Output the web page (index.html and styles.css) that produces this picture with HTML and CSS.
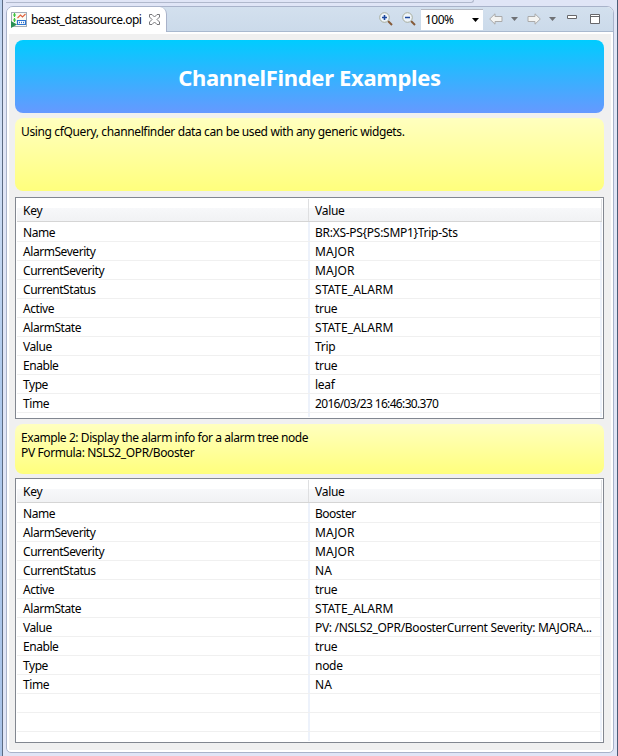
FILE: index.html
```
<!DOCTYPE html>
<html lang="en">
<head>
<meta charset="utf-8">
<title>beast_datasource.opi</title>
<link rel="stylesheet" href="styles.css">
</head>
<body>
<div class="window">
  <div class="strip"></div>
  <div class="folder">
    <div class="tabbar">
      <div class="tab">
        <svg class="opi" width="16" height="16" viewBox="0 0 16 16"><rect x=".5" y=".5" width="15" height="14" fill="#fbfbf4" stroke="#a3adb8"/><path d="M3.500 1v4M2 3h3M3.500 6v4M2 8h3" stroke="#3ec63e" stroke-width="1.200" fill="none"/><path d="M6.500 6l3-3 2 2 3-3" stroke="#e0603c" fill="none" stroke-width="1.100"/><path d="M6.500 8.500h8v4h-8z" fill="#fff" stroke="#2d74d0" stroke-width="1.200"/><path d="M8 10.500h6" stroke="#2d74d0" stroke-width="1.500" stroke-dasharray="1 1"/><path d="M0 9l6 3.500L0 16z" fill="#2a9055"/></svg>
        <span class="tab-name">beast_datasource.opi</span>
        <svg class="close" width="11" height="11" viewBox="0 0 11 11"><path d="M.5.500h2.500l2.500 2.500L8 .5h2.500v2.500L8 5.500l2.500 2.500v2.500H8L5.500 8 3 10.500H.5V8L3 5.500.5 3z" fill="#fff" stroke="#76767a"/></svg>
      </div>
      <div class="tools">
        <svg class="zin" width="14" height="14" viewBox="0 0 14 14"><path d="M9 9l4 4" stroke="#855a38" stroke-width="2"/><circle cx="5.500" cy="5.500" r="4.800" fill="#eef5fb" stroke="#a8ad9d"/><path d="M3 5.500h5M5.500 3v5" stroke="#1c489f" stroke-width="1.600"/></svg>
        <svg class="zout" width="14" height="14" viewBox="0 0 14 14"><path d="M9 9l4 4" stroke="#855a38" stroke-width="2"/><circle cx="5.500" cy="5.500" r="4.800" fill="#eef5fb" stroke="#a8ad9d"/><path d="M3 5.500h5" stroke="#1c489f" stroke-width="1.600"/></svg>
        <div class="combo"><span>100%</span><svg width="7" height="4" viewBox="0 0 7 4"><path d="M0 0h7L3.500 4z" fill="#000"/></svg></div>
        <svg class="back" width="14" height="12" viewBox="0 0 14 12"><path d="M.7 6L6 .8v2.700h7v5H6v2.700z" fill="#f4f4f2" stroke="#aaa" stroke-linejoin="round"/></svg>
        <svg class="drop" width="7" height="4" viewBox="0 0 7 4"><path d="M0 0h7L3.500 4z" fill="#6f7175"/></svg>
        <svg class="fwd" width="14" height="12" viewBox="0 0 14 12"><path d="M13.300 6L8 .8v2.700H1v5h7v2.700z" fill="#f4f4f2" stroke="#aaa" stroke-linejoin="round"/></svg>
        <svg class="drop" width="7" height="4" viewBox="0 0 7 4"><path d="M0 0h7L3.500 4z" fill="#6f7175"/></svg>
        <svg class="min" width="10" height="4" viewBox="0 0 10 4"><path d="M.5.500h9v3h-9z" fill="#fff" stroke="#67676b"/></svg>
        <svg class="max" width="10" height="10" viewBox="0 0 10 10"><path d="M.5.500h9v9h-9zM.5 2.500h9" fill="#fff" stroke="#67676b"/></svg>
      </div>
    </div>
    <div class="canvas">
      <h1 class="banner"><span>ChannelFinder Examples</span></h1>
      <div class="note note-tall"><p class="n1">Using cfQuery, channelfinder data can be used with any generic widgets.</p></div>
      <div class="table table-a">
        <div class="head"><span>Key</span><span>Value</span></div>
        <div class="row"><span>Name</span><span>BR:XS-PS{PS:SMP1}Trip-Sts</span></div>
        <div class="row"><span>AlarmSeverity</span><span class="caps">MAJOR</span></div>
        <div class="row"><span>CurrentSeverity</span><span class="caps">MAJOR</span></div>
        <div class="row"><span>CurrentStatus</span><span class="caps">STATE_ALARM</span></div>
        <div class="row"><span>Active</span><span>true</span></div>
        <div class="row"><span>AlarmState</span><span class="caps">STATE_ALARM</span></div>
        <div class="row"><span>Value</span><span>Trip</span></div>
        <div class="row"><span>Enable</span><span>true</span></div>
        <div class="row"><span>Type</span><span>leaf</span></div>
        <div class="row"><span>Time</span><span class="stamp">2016/03/23 16:46:30.370</span></div>
        <div class="row rest"><span></span><span></span></div>
      </div>
      <div class="note note-short"><p class="n2">Example 2: Display the alarm info for a alarm tree node</p><p class="n3">PV Formula: NSLS2_OPR/Booster</p></div>
      <div class="table table-b">
        <div class="head"><span>Key</span><span>Value</span></div>
        <div class="row"><span>Name</span><span class="word">Booster</span></div>
        <div class="row"><span>AlarmSeverity</span><span class="caps">MAJOR</span></div>
        <div class="row"><span>CurrentSeverity</span><span class="caps">MAJOR</span></div>
        <div class="row"><span>CurrentStatus</span><span class="caps">NA</span></div>
        <div class="row"><span>Active</span><span>true</span></div>
        <div class="row"><span>AlarmState</span><span class="caps">STATE_ALARM</span></div>
        <div class="row"><span>Value</span><span class="long">PV: /NSLS2_OPR/BoosterCurrent Severity: MAJORA...</span></div>
        <div class="row"><span>Enable</span><span>true</span></div>
        <div class="row"><span>Type</span><span>node</span></div>
        <div class="row"><span>Time</span><span class="caps">NA</span></div>
        <div class="row"><span></span><span></span></div>
        <div class="row"><span></span><span></span></div>
        <div class="row rest"><span></span><span></span></div>
      </div>
    </div>
  </div>
</div>
</body>
</html>
```
FILE: styles.css
```
* { box-sizing: border-box; }
body { margin: 0; width: 618px; height: 756px; overflow: hidden; font: 12px/15px "Noto Sans", "Open Sans", sans-serif; letter-spacing: -0.28px; color: #000; background: linear-gradient(#bdd3f0, #d2e0f5 20%, #aec9ec 50%, #a9c3e8); }
svg { display: block; flex: none; }
p, h1 { margin: 0; }
.window { margin-left: 2px; width: 616px; height: 756px; padding: 0 3px; background: #e0e5f6; border-left: 1px solid #5c6b82; border-right: 1px solid #4b5d78; }
.strip { width: 468px; height: 3px; border: 1px solid #b0b8cc; border-width: 0 1px 1px 0; border-radius: 0 0 3px 0; }
.folder { margin-top: 3px; width: 608px; height: 747px; border: 1px solid #a9b3ca; border-radius: 7px 7px 5px 5px; background: #fff; overflow: hidden; }
.tabbar { height: 25px; display: flex; background: linear-gradient(#d3e0ee, #cbdaea); border-bottom: 1px solid #a9b9cf; }
.tab { width: 160px; height: 25px; background: #fff; border-right: 1px solid #a9b3ca; border-radius: 0 7px 0 0; display: flex; align-items: center; padding-left: 4px; }
.tab-name { margin-left: 4px; width: 112px; white-space: nowrap; letter-spacing: -0.48px; }
.close { margin-left: 6px; }
.tools { flex: 1; display: flex; align-items: center; padding-left: 212px; }
.zout { margin-left: 9px; }
.combo { margin-left: 5px; width: 62px; height: 21px; background: #fff; border-top: 1px solid #b5b9c2; display: flex; align-items: center; justify-content: space-between; padding: 0 4px; letter-spacing: -0.5px; }
.back { margin-left: 6px; }
.drop { margin-left: 8px; }
.fwd { margin-left: 9px; }
.min { margin: 0 0 5px 11px; }
.max { margin-left: 13px; }
.canvas { margin: 2px 2px 0; height: 716px; padding: 6px; background: #f0f0f0; }
.banner { width: 589px; height: 73px; border-radius: 8px; background: linear-gradient(#00ccff, #6699ff); color: #fff; font-size: 22px; line-height: 75px; text-align: center; letter-spacing: -0.32px; }
.note { width: 589px; padding: 6px 6px 0; border-radius: 8px; margin-top: 5px; background: linear-gradient(#ffffbf, #ffff7d); white-space: nowrap; }
.note-tall { height: 73px; }
.note-short { height: 50px; }
.n1 { letter-spacing: -0.37px; }
.n2 { letter-spacing: -0.43px; }
.n3 { letter-spacing: -0.38px; }
.table { width: 589px; margin-top: 6px; border: 1px solid #828790; background: #fff; padding: 1px; display: flex; flex-direction: column; overflow: hidden; }
.table-a { height: 222px; }
.table-b { height: 265px; margin-top: 4px; }
.head { flex: none; height: 23px; width: 585px; display: grid; grid-template-columns: 292px 293px; background: linear-gradient(#fff 0 40%, #f7f8fa 41%, #f1f2f4); border-bottom: 1px solid #d5d5d5; }
.head span { padding: 4px 0 0 6px; border-right: 1px solid #dedfe1; }
.row { flex: none; height: 19px; width: 585px; display: grid; grid-template-columns: 293px 292px; border-bottom: 1px solid #f0f0f0; white-space: nowrap; }
.head + .row { height: 20px; }
.row span { padding: 2px 0 0 6px; border-right: 2px solid #edf2fb; }
.row span:first-child { letter-spacing: -0.44px; }
.head + .row span { padding-top: 3px; }
.row span + span { padding-left: 5px; }
.row .caps { letter-spacing: 0.04px; }
.row .stamp { letter-spacing: -0.66px; }
.row .word { letter-spacing: -0.5px; }
.row .long { letter-spacing: -0.32px; }
.row.rest { flex: 1; border: 0; height: auto; }
```
